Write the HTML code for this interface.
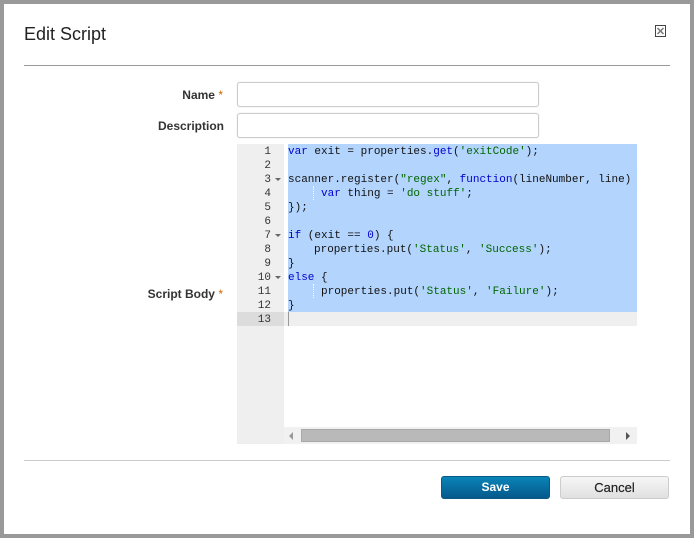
<!DOCTYPE html>
<html><head><meta charset="utf-8"><style>
html,body{margin:0;padding:0;background:#fff}
body{width:694px;height:538px;position:relative;overflow:hidden;font-family:"Liberation Sans",sans-serif}
.a{position:absolute}
#frame{left:0;top:0;width:686px;height:530px;border:4px solid #999}
h1{position:absolute;left:24px;top:24px;margin:0;font-size:18px;line-height:20px;font-weight:400;color:#222}
.lab{position:absolute;right:470px;font-size:12px;line-height:14px;font-weight:700;color:#333;white-space:nowrap}
.st{right:471px}
.lab i{font-style:normal;font-weight:400;color:#c60}
.inp{position:absolute;left:237px;width:300px;height:23px;border:1px solid #ccc;border-radius:3px;background:#fff;box-shadow:0 0 1px #ccc}
.ln,.cl{position:absolute;height:14px;font:11px/14px "Liberation Mono",monospace;white-space:pre;margin-top:1px}
.ln{left:237px;width:34px;text-align:right;color:#333}
.cl{left:288px;color:#111}
.k{color:#00c}.s{color:#060}.n{color:#00c}
.g{position:absolute;left:275px;width:0;height:0;border-left:3px solid transparent;border-right:3px solid transparent;border-top:3px solid #666}
.btn{position:absolute;top:476px;width:107px;height:21px;border-radius:3px;text-align:center;line-height:21px}
.ind{position:absolute;left:313px;width:0;height:14px;border-left:1px dotted #fff}
</style></head><body>
<div class="a" id="frame"></div>
<h1>Edit Script</h1>
<svg class="a" style="left:655px;top:25px" width="11" height="12" viewBox="0 0 11 12"><rect x=".5" y=".5" width="10" height="11" fill="none" stroke="#444"/><path d="M2.5 3 8.5 9M8.5 3 2.5 9" stroke="#777" stroke-width="1.5" fill="none"/></svg>
<div class="a" style="left:24px;top:65px;width:646px;height:1px;background:#999"></div>

<div class="lab st" style="top:88px">Name <i>*</i></div>
<div class="inp" style="top:82px"></div>
<div class="lab" style="top:119px">Description</div>
<div class="inp" style="top:113px"></div>
<div class="lab st" style="top:287px">Script Body <i>*</i></div>

<div class="a" style="left:237px;top:144px;width:400px;height:300px;background:#fff"></div>
<div class="a" style="left:237px;top:144px;width:47px;height:300px;background:#efefef"></div>
<div class="a" style="left:288px;top:144px;width:349px;height:168px;background:#b3d4fd"></div>
<div class="a" style="left:284px;top:312px;width:353px;height:14px;background:#efefef"></div>
<div class="a" style="left:237px;top:312px;width:47px;height:14px;background:#dcdcdc"></div>
<div class="a" style="left:288px;top:312px;width:1px;height:14px;background:#999"></div>

<div class="ln" style="top:144px">1</div>
<div class="ln" style="top:158px">2</div>
<div class="ln" style="top:172px">3</div>
<div class="ln" style="top:186px">4</div>
<div class="ln" style="top:200px">5</div>
<div class="ln" style="top:214px">6</div>
<div class="ln" style="top:228px">7</div>
<div class="ln" style="top:242px">8</div>
<div class="ln" style="top:256px">9</div>
<div class="ln" style="top:270px">10</div>
<div class="ln" style="top:284px">11</div>
<div class="ln" style="top:298px">12</div>
<div class="ln" style="top:312px">13</div>
<div class="g" style="top:178px"></div>
<div class="g" style="top:234px"></div>
<div class="g" style="top:276px"></div>

<div class="cl" style="top:144px"><span class="k">var</span> exit = properties.<span class="k">get</span>(<span class="s">'exitCode'</span>);</div>
<div class="cl" style="top:172px">scanner.register(<span class="s">"regex"</span>, <span class="k">function</span>(lineNumber, line)</div>
<div class="ind" style="top:186px"></div>
<div class="cl" style="top:186px;left:321px"><span class="k">var</span> thing = <span class="s">'do stuff'</span>;</div>
<div class="cl" style="top:200px">});</div>
<div class="cl" style="top:228px"><span class="k">if</span> (exit == <span class="n">0</span>) {</div>
<div class="cl" style="top:242px;left:314px">properties.put(<span class="s">'Status'</span>, <span class="s">'Success'</span>);</div>
<div class="cl" style="top:256px">}</div>
<div class="cl" style="top:270px"><span class="k">else</span> {</div>
<div class="ind" style="top:284px"></div>
<div class="cl" style="top:284px;left:321px">properties.put(<span class="s">'Status'</span>, <span class="s">'Failure'</span>);</div>
<div class="cl" style="top:298px">}</div>

<div class="a" style="left:284px;top:427px;width:353px;height:17px;background:#f1f1f1"></div>
<div class="a" style="left:301px;top:429px;width:307px;height:11px;background:#b9b9b9;border:1px solid #a8a8a8"></div>
<svg class="a" style="left:289px;top:432px" width="5" height="9"><path d="M4 0V8L0 4Z" fill="#999"/></svg>
<svg class="a" style="left:626px;top:432px" width="5" height="9"><path d="M0 0V8L4 4Z" fill="#555"/></svg>

<div class="a" style="left:24px;top:460px;width:646px;height:1px;background:#ccc"></div>
<div class="btn" style="left:441px;border:1px solid #0a5a86;background:linear-gradient(#0a84b8,#05598a);color:#fff;font-size:12px;font-weight:700">Save</div>
<div class="btn" style="left:560px;border:1px solid #ccc;background:linear-gradient(#f6f6f6,#e0e0e0);color:#222;font-size:13px;-webkit-text-stroke:.2px #222">Cancel</div>
</body></html>
